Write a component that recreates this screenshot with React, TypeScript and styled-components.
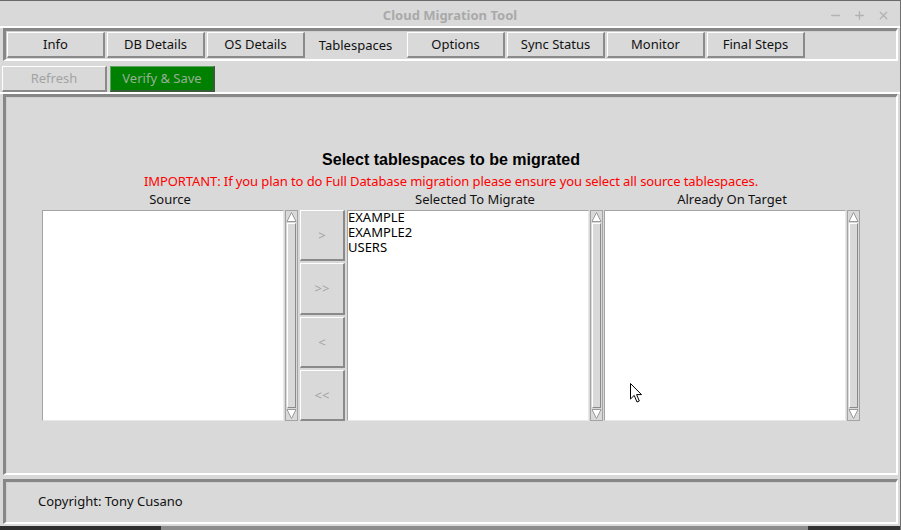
import styled, { createGlobalStyle } from "styled-components";
import { Minus, Plus, X } from "lucide-react";

const GlobalStyle = createGlobalStyle`
    body {
        margin: 0;
        background: #d9d9d9;
        font-family: "Noto Sans", "DejaVu Sans", sans-serif;
        font-size: 13px;
    }
`

const Window = styled.div`
    position: relative;
    width: 900px;
    height: 529px;
    border-top: 1px solid #6a6a6a;
    border-right: 1px solid #707070;
    background: #d9d9d9;
    display: flex;
    flex-direction: column;
    overflow: hidden;
`

const TitleBar = styled.div`
    box-sizing: border-box;
    padding-top: 2px;
    border-bottom: 2px solid #fff;
    height: 27px;
    display: flex;
    align-items: center;
    justify-content: center;
    position: relative;
    color: #a9a9a9;
    font-weight: bold;
    font-size: 13px;
`

const WindowControls = styled.div`
    position: absolute;
    right: 10px;
    top: 8px;
    display: flex;
    gap: 11px;
    color: #b3b3b3;
`

const Sunken = styled.div`
    margin: 0 2px 0 3px;
    border-style: solid;
    border-width: 3px 2px 2px 3px;
    border-color: #878787 #fff #fff #878787;
    box-shadow: inset 1px 1px 0 #cfcfcf;
`

const TabFrame = styled(Sunken)`
    padding: 1px;
    display: flex;
    gap: 2px;
`

const Tab = styled.div<{ $active?: boolean }>`
    width: 98px;
    height: 26px;
    box-sizing: border-box;
    display: flex;
    align-items: center;
    justify-content: center;
    color: #111;
    border-style: solid;
    border-width: 1px 2px 2px 1px;
    border-color: ${p => p.$active ? "transparent" : "#fff #8a8a8a #8a8a8a #fff"};
    padding-bottom: ${p => p.$active ? "0" : "2px"};
`

const ActionRow = styled.div`
    padding: 5px 0 0 2px;
    box-sizing: border-box;
    height: 33px;
    border-bottom: 2px solid #fff;
    display: flex;
    gap: 3px;
`

const ActionButton = styled.div<{ $green?: boolean }>`
    width: 105px;
    height: 26px;
    box-sizing: border-box;
    padding-bottom: 2px;
    display: flex;
    align-items: center;
    justify-content: center;
    background: ${p => p.$green ? "#008000" : "#d9d9d9"};
    color: ${p => p.$green ? "#97b097" : "#a3a3a3"};
    border-style: solid;
    border-width: 1px 2px 2px 1px;
    border-color: ${p => p.$green ? "#5aa45a #3a5a3a #3a5a3a #5aa45a" : "#fff #8a8a8a #8a8a8a #fff"};
`

const MainPanel = styled(Sunken)`
    height: 381px;
    box-sizing: border-box;
    padding-top: 53px;
    display: flex;
    flex-direction: column;
    align-items: center;
`

const Heading = styled.div`
    font-family: "Liberation Sans", Arial, sans-serif;
    font-weight: bold;
    font-size: 16px;
    line-height: 20px;
    color: #000;
`

const Warning = styled.div`
    margin-top: 2px;
    line-height: 18px;
    letter-spacing: -0.09px;
    color: #ff0000;
`

const Columns = styled.div`
    display: flex;
    align-items: flex-start;
`

const Column = styled.div<{ $gap?: number }>`
    display: flex;
    flex-direction: column;
    margin-left: ${p => p.$gap ?? 0}px;
`

const Label = styled.div`
    height: 18px;
    line-height: 18px;
    margin-bottom: 2px;
    text-align: center;
    color: #111;
`

const Pane = styled.div`
    display: flex;
    gap: 1px;
    height: 211px;
`

const ListBox = styled.div`
    width: 242px;
    box-sizing: border-box;
    background: #fff;
    border: 1px solid #a3a3a3;
    border-right-color: #e8e8e8;
    border-bottom-color: #e8e8e8;
    line-height: 15px;
    color: #000;
`

const Items = styled.div`
    margin-top: -1px;
`

const ScrollTrack = styled.div`
    width: 13px;
    box-sizing: border-box;
    border: 1px solid #a3a3a3;
    background: #d9d9d9;
    display: flex;
    flex-direction: column;
`

const ScrollArrow = styled.svg`
    display: block;
    width: 11px;
    height: 12px;
    flex: none;
`

const ScrollThumb = styled.div`
    flex: 1;
    margin: 0 1px;
    border-style: solid;
    border-width: 1px;
    border-color: #fff #8a8a8a #8a8a8a #fff;
`

const MoveButtons = styled.div`
    width: 45px;
    height: 211px;
    display: flex;
    flex-direction: column;
    gap: 2px;
`

const MoveButton = styled.div`
    flex: 1;
    box-sizing: border-box;
    display: flex;
    align-items: center;
    justify-content: center;
    color: #a3a3a3;
    border-style: solid;
    border-width: 1px 2px 2px 1px;
    border-color: #fff #8a8a8a #8a8a8a #fff;
`

const Footer = styled(Sunken)`
    margin-top: 4px;
    height: 45px;
    box-sizing: border-box;
    display: flex;
    align-items: center;
    padding: 0 0 2px 32px;
    color: #111;
`

const BottomEdge = styled.div`
    margin-top: auto;
    height: 4px;
    display: flex;
`

const EdgePart = styled.div<{ $w?: number; $c: string }>`
    background: ${p => p.$c};
    ${p => p.$w ? `width: ${p.$w}px;` : "flex: 1;"}
`

const Cursor = styled.svg`
    position: absolute;
    left: 630px;
    top: 382px;
`

function Scrollbar() {
    return (
        <ScrollTrack>
            <ScrollArrow viewBox="0 0 11 12">
                <polygon points="1,10.5 5.5,1.5 10,10.5" fill="#fff" stroke="#9a9a9a" strokeWidth="1" />
            </ScrollArrow>
            <ScrollThumb />
            <ScrollArrow viewBox="0 0 11 12">
                <polygon points="1,1.5 5.5,10.5 10,1.5" fill="#fff" stroke="#9a9a9a" strokeWidth="1" />
            </ScrollArrow>
        </ScrollTrack>
    )
}

function ListPane({ items }: { items: string[] }) {
    return (
        <Pane>
            <ListBox>
                <Items>
                    {items.map(i => <div key={i}>{i}</div>)}
                </Items>
            </ListBox>
            <Scrollbar />
        </Pane>
    )
}

const tabs = ["Info", "DB Details", "OS Details", "Tablespaces", "Options", "Sync Status", "Monitor", "Final Steps"]

export default function App() {
    return (
        <>
            <GlobalStyle />
            <Window>
                <TitleBar>
                    Cloud Migration Tool
                    <WindowControls>
                        <Minus size={13} strokeWidth={2.5} />
                        <Plus size={13} strokeWidth={2.5} />
                        <X size={13} strokeWidth={2.5} />
                    </WindowControls>
                </TitleBar>
                <TabFrame>
                    {tabs.map(t => <Tab key={t} $active={t === "Tablespaces"}>{t}</Tab>)}
                </TabFrame>
                <ActionRow>
                    <ActionButton>Refresh</ActionButton>
                    <ActionButton $green>Verify &amp; Save</ActionButton>
                </ActionRow>
                <MainPanel>
                    <Heading>Select tablespaces to be migrated</Heading>
                    <Warning>IMPORTANT: If you plan to do Full Database migration please ensure you select all source tablespaces.</Warning>
                    <Columns>
                        <Column>
                            <Label>Source</Label>
                            <ListPane items={[]} />
                        </Column>
                        <Column $gap={2}>
                            <Label />
                            <MoveButtons>
                                <MoveButton>&gt;</MoveButton>
                                <MoveButton>&gt;&gt;</MoveButton>
                                <MoveButton>&lt;</MoveButton>
                                <MoveButton>&lt;&lt;</MoveButton>
                            </MoveButtons>
                        </Column>
                        <Column $gap={2}>
                            <Label>Selected To Migrate</Label>
                            <ListPane items={["EXAMPLE", "EXAMPLE2", "USERS"]} />
                        </Column>
                        <Column $gap={1}>
                            <Label>Already On Target</Label>
                            <ListPane items={[]} />
                        </Column>
                    </Columns>
                </MainPanel>
                <Footer>Copyright: Tony Cusano</Footer>
                <BottomEdge>
                    <EdgePart $w={161} $c="#2f2f2f" />
                    <EdgePart $c="#8c8c8c" />
                    <EdgePart $w={92} $c="#333" />
                </BottomEdge>
                <Cursor width="13" height="21" viewBox="0 0 13 21">
                    <path d="M0.5,0.5 L0.5,16 L4.2,12.4 L7,19 L9.3,18 L6.6,11.6 L11.5,11.6 Z" fill="#fff" stroke="#000" strokeWidth="1" />
                </Cursor>
            </Window>
        </>
    )
}
